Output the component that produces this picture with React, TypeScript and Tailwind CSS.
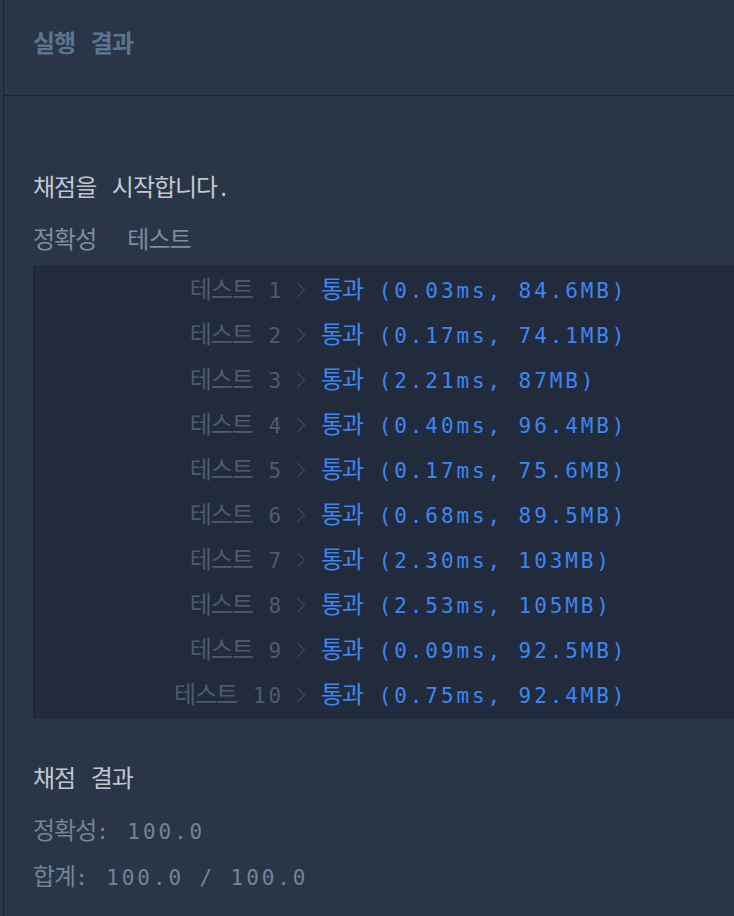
import React from "react";

const rows = [
  { n: 1, r: "(0.03ms, 84.6MB)" },
  { n: 2, r: "(0.17ms, 74.1MB)" },
  { n: 3, r: "(2.21ms, 87MB)" },
  { n: 4, r: "(0.40ms, 96.4MB)" },
  { n: 5, r: "(0.17ms, 75.6MB)" },
  { n: 6, r: "(0.68ms, 89.5MB)" },
  { n: 7, r: "(2.30ms, 103MB)" },
  { n: 8, r: "(2.53ms, 105MB)" },
  { n: 9, r: "(0.09ms, 92.5MB)" },
  { n: 10, r: "(0.75ms, 92.4MB)" },
];

const mono = "font-['DejaVu_Sans_Mono','Noto_Sans_CJK_KR',monospace] text-[21px] tracking-[2.9px]";

function T({ s }: { s: string }) {
  const parts = s.split(/([가-힣]+)/);
  return (
    <>
      {parts.map((p, i) =>
        /[가-힣]/.test(p) ? (
          <span key={i} className="text-[24px] tracking-[-1px]">
            {p}
          </span>
        ) : (
          <span key={i}>{p}</span>
        )
      )}
    </>
  );
}

function Chevron() {
  return (
    <svg width="10" height="16" viewBox="0 0 10 16" className="shrink-0">
      <path d="M1.5 1 L8.5 8 L1.5 15" fill="none" stroke="#3a4657" strokeWidth="1.4" />
    </svg>
  );
}

export default function App() {
  return (
    <div className="w-[734px] h-[916px] bg-[#2a3547] pl-[3px] overflow-hidden">
      <div className="h-full border-l border-[#1c2533] flex flex-col">
        <div className={`h-[96px] border-b border-[#1c2533] pl-[29px] flex items-center ${mono}`}>
          <span className="font-bold text-[#5b7590] pb-[8px] whitespace-pre">
            <T s="실행 결과" />
          </span>
        </div>
        <div className={`pl-[29px] pt-[68px] ${mono}`}>
          <div className="h-[48px] leading-[48px] text-[#bfc8d2] whitespace-pre">
            <T s="채점을 시작합니다." />
          </div>
          <div className="mt-[4px] h-[48px] leading-[48px] text-[#7890a0] whitespace-pre">
            <T s="정확성  테스트" />
          </div>
          <div className="mt-[2px] -mr-[40px] bg-[#222b3b] border border-[#1b2331]">
            {rows.map((row) => (
              <div key={row.n} className="h-[45px] flex items-center">
                <div className="w-[250px] text-right text-[#4d5b6c] whitespace-pre">
                  <T s={`테스트 ${row.n}`} />
                </div>
                <div className="ml-[12px]">
                  <Chevron />
                </div>
                <div className="ml-[15px] text-[#3d86f4] whitespace-pre">
                  <T s={`통과 ${row.r}`} />
                </div>
              </div>
            ))}
          </div>
          <div className="mt-[37px] h-[48px] leading-[48px] text-[#bfc8d2] whitespace-pre">
            <T s="채점 결과" />
          </div>
          <div className="mt-[4px] h-[48px] leading-[48px] text-[#6f8696] whitespace-pre">
            <T s="정확성: 100.0" />
          </div>
          <div className="-mt-[2px] h-[48px] leading-[48px] text-[#6f8696] whitespace-pre">
            <T s="합계: 100.0 / 100.0" />
          </div>
        </div>
      </div>
    </div>
  );
}
